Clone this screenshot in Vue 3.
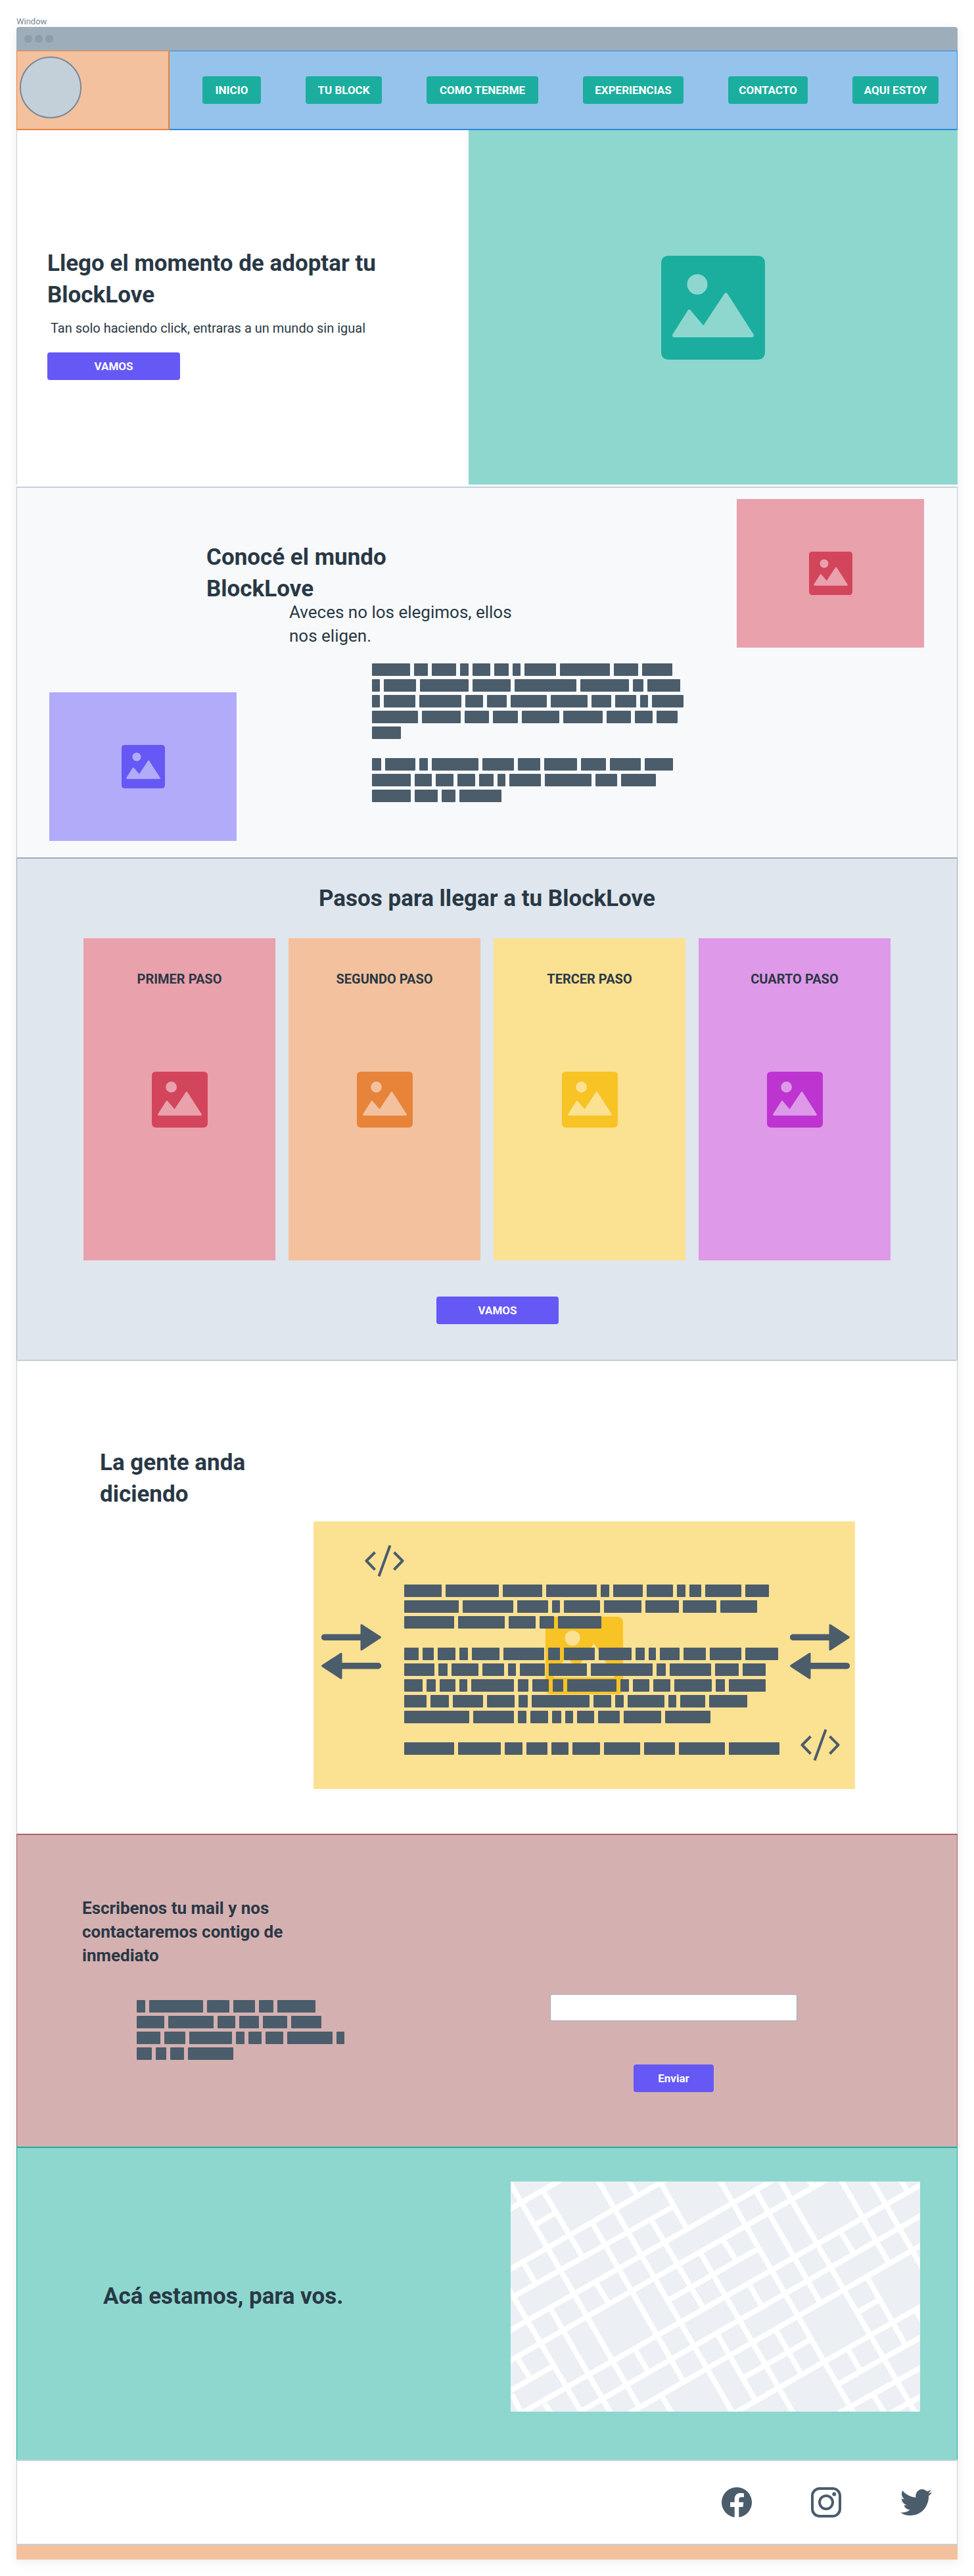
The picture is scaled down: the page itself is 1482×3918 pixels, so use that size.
<script setup>
const navItems = ['INICIO', 'TU BLOCK', 'COMO TENERME', 'EXPERIENCIAS', 'CONTACTO', 'AQUI ESTOY']

const steps = [
  { title: 'PRIMER PASO', tone: 'pink' },
  { title: 'SEGUNDO PASO', tone: 'orange' },
  { title: 'TERCER PASO', tone: 'yellow' },
  { title: 'CUARTO PASO', tone: 'violet' },
]

// Placeholder copy: paragraphs > lines > word widths.
const aboutCopy = [
  [
    [58, 21, 37, 13, 27, 22, 12, 48, 76, 37, 46],
    [12, 49, 74, 58, 94, 74, 16, 50],
    [12, 48, 64, 27, 30, 55, 56, 30, 32, 12, 48],
    [70, 59, 37, 38, 57, 60, 37, 27, 32],
    [44],
  ],
  [
    [14, 46, 13, 71, 48, 34, 50, 38, 47, 43],
    [59, 26, 27, 27, 22, 12, 48, 71, 33, 53],
    [59, 35, 21, 64],
  ],
]

const reviewCopy = [
  [
    [57, 81, 60, 77, 13, 45, 40, 13, 18, 55, 36],
    [83, 77, 47, 12, 55, 57, 51, 51, 56],
    [76, 71, 41, 22, 66],
  ],
  [
    [22, 17, 27, 13, 42, 62, 18, 47, 50, 14, 11, 30, 34, 48, 50],
    [46, 14, 41, 33, 12, 38, 58, 94, 14, 63, 36, 35],
    [28, 14, 24, 12, 65, 16, 25, 16, 75, 13, 25, 26, 57, 14, 56],
    [34, 28, 46, 42, 14, 88, 27, 13, 56, 12, 38, 58],
    [99, 62, 13, 27, 14, 12, 26, 33, 57, 69],
  ],
  [[76, 65, 27, 32, 26, 42, 55, 47, 70, 77]],
]

const contactCopy = [
  [
    [13, 82, 34, 33, 22, 58],
    [42, 69, 27, 30, 37, 46],
    [36, 32, 65, 13, 20, 27, 69, 12],
    [23, 16, 21, 69],
  ],
]

// Map streets as [x1, y1, x2, y2] in the map's own units.
const streets = [
  [70, 303, 236, 168], [70, 578, 572, 168], [86, 698, 600, 288], [70, 857, 920, 168],
  [70, 995, 1090, 168], [70, 1133, 208, 1020], [586, 714, 873, 481], [112, 1230, 1400, 186],
  [293, 1230, 1400, 326], [460, 1230, 1400, 463], [828, 1067, 1045, 892], [1193, 770, 1262, 714],
  [152, 373, 218, 318], [798, 1230, 1400, 741], [1130, 1099, 1400, 881], [1133, 1230, 1400, 1021],
  [1300, 1230, 1400, 1152],
  [72, 175, 494, 1214], [70, 665, 305, 1230], [80, 1145, 110, 1230], [183, 222, 308, 520],
  [120, 552, 157, 640], [205, 755, 398, 1230], [100, 985, 138, 1070], [185, 1188, 205, 1230],
  [357, 168, 791, 1230], [455, 168, 484, 238], [340, 365, 632, 1085], [351, 637, 390, 727],
  [561, 185, 640, 382], [530, 352, 697, 755], [478, 945, 517, 1038], [563, 1155, 595, 1230],
  [687, 500, 986, 1230], [760, 440, 800, 530], [749, 168, 1180, 1230], [865, 215, 1072, 725],
  [943, 168, 1379, 1230], [1037, 168, 1047, 192], [1140, 168, 1295, 550], [1238, 168, 1400, 566],
  [1333, 168, 1355, 222], [1139, 405, 1180, 502], [846, 650, 884, 742], [743, 875, 865, 1175],
  [931, 855, 1011, 1053], [1225, 615, 1347, 920], [1162, 940, 1200, 1033], [1245, 1150, 1280, 1230],
  [1381, 762, 1400, 812],
]
</script>

<template>
  <svg class="sprite" aria-hidden="true">
    <symbol id="picture" viewBox="0 0 158 158">
      <path
        fill="currentColor"
        fill-rule="evenodd"
        d="M12 0H146Q158 0 158 12V146Q158 158 146 158H12Q0 158 0 146V12Q0 0 12 0Z
           M55 28A15.5 15.5 0 1 0 55 59A15.5 15.5 0 1 0 55 28Z
           M20 124Q16 124 17.5 119.500L40 84Q42.500 79.500 45.500 84L64.300 106L96 58Q98.300 54.500 101 58L140.500 119.500Q142 124 138 124Z"
      />
    </symbol>
    <symbol id="code" viewBox="0 0 60 48">
      <path
        fill="none"
        stroke="currentColor"
        stroke-width="4"
        stroke-linejoin="round"
        d="M15.500 11L2.500 24L15.500 37.500M44.500 11L57.500 24L44.500 37.500M38.500 0.500L21.500 47.500"
      />
    </symbol>
    <symbol id="arrows" viewBox="0 0 91 84">
      <path
        fill="currentColor"
        d="M4.500 15.500H59.500V2Q59.500 -1 62.500 1L90 18.800Q92 20.300 90 21.800L62.500 39.700Q59.500 41.500 59.500 38.500V25H4.500A4.700 4.700 0 0 1 4.500 15.500Z
           M86.500 59H31.500V45.500Q31.500 42.500 28.500 44.500L1 62.300Q-1 63.800 1 65.300L28.500 83.200Q31.500 85 31.500 82V68.500H86.500A4.700 4.700 0 0 0 86.500 59Z"
      />
    </symbol>
  </svg>

  <div class="page">
    <p class="frame-name">Window</p>
    <div class="window">
      <div class="title-bar">
        <span class="dot"></span><span class="dot"></span><span class="dot"></span>
      </div>

      <header class="header">
        <div class="brand"><span class="logo"></span></div>
        <nav class="nav">
          <button v-for="item in navItems" :key="item" type="button" class="btn btn-teal">{{ item }}</button>
        </nav>
      </header>

      <section class="hero">
        <div class="hero-text">
          <h1 class="title">Llego el momento de adoptar tu<br />BlockLove</h1>
          <p class="hero-sub">Tan solo haciendo click, entraras a un mundo sin igual</p>
          <button type="button" class="btn btn-purple hero-btn">VAMOS</button>
        </div>
        <div class="hero-image teal"><svg class="icon-xl"><use href="#picture" /></svg></div>
      </section>

      <section class="about">
        <div class="thumb purple about-left"><svg class="icon-sm"><use href="#picture" /></svg></div>
        <div class="about-text">
          <h2 class="title">Conocé el mundo<br />BlockLove</h2>
          <p class="about-sub">Aveces no los elegimos, ellos<br />nos eligen.</p>
          <div class="copy about-copy">
            <div v-for="(para, p) in aboutCopy" :key="p" class="para">
              <div v-for="(line, l) in para" :key="l" class="line">
                <span v-for="(w, i) in line" :key="i" class="word" :style="{ width: w + 'px' }"></span>
              </div>
            </div>
          </div>
        </div>
        <div class="thumb pink about-right"><svg class="icon-sm"><use href="#picture" /></svg></div>
      </section>

      <section class="steps">
        <h2 class="title">Pasos para llegar a tu BlockLove</h2>
        <div class="cards">
          <article v-for="step in steps" :key="step.title" class="card" :class="step.tone">
            <h3 class="card-title">{{ step.title }}</h3>
            <svg class="icon-md"><use href="#picture" /></svg>
          </article>
        </div>
        <button type="button" class="btn btn-purple steps-btn">VAMOS</button>
      </section>

      <section class="reviews">
        <h2 class="title">La gente anda<br />diciendo</h2>
        <div class="review-box yellow">
          <svg class="icon-lg review-picture"><use href="#picture" /></svg>
          <div class="review-left">
            <svg class="code"><use href="#code" /></svg>
            <svg class="arrows"><use href="#arrows" /></svg>
          </div>
          <div class="copy review-copy">
            <div v-for="(para, p) in reviewCopy" :key="p" class="para">
              <div v-for="(line, l) in para" :key="l" class="line">
                <span v-for="(w, i) in line" :key="i" class="word" :style="{ width: w + 'px' }"></span>
              </div>
            </div>
          </div>
          <div class="review-right">
            <svg class="arrows"><use href="#arrows" /></svg>
            <svg class="code"><use href="#code" /></svg>
          </div>
        </div>
      </section>

      <section class="contact">
        <div class="contact-text">
          <h2 class="subtitle">Escribenos tu mail y nos<br />contactaremos contigo de<br />inmediato</h2>
          <div class="copy contact-copy">
            <div v-for="(para, p) in contactCopy" :key="p" class="para">
              <div v-for="(line, l) in para" :key="l" class="line">
                <span v-for="(w, i) in line" :key="i" class="word" :style="{ width: w + 'px' }"></span>
              </div>
            </div>
          </div>
        </div>
        <form class="contact-form" @submit.prevent>
          <input id="mail" class="mail" type="email" aria-label="Mail" />
          <button type="submit" class="btn btn-purple send">Enviar</button>
        </form>
      </section>

      <section class="place">
        <h2 class="title">Acá estamos, para vos.</h2>
        <svg class="map" viewBox="76 174 1318 1050" preserveAspectRatio="none" role="img" aria-label="Mapa">
          <line v-for="(s, i) in streets" :key="i" class="street" :x1="s[0]" :y1="s[1]" :x2="s[2]" :y2="s[3]" />
        </svg>
      </section>

      <footer class="footer">
        <a href="#" class="social" aria-label="Facebook">
          <svg width="46" height="46" viewBox="0 0 46 46">
            <circle cx="23" cy="23" r="23" fill="currentColor" />
            <path fill="#fff" d="M19.700 46V30H13V22.700H19.700V18C19.700 12 23.500 8.700 29 8.700Q31.500 8.700 34 9.200V15H30.500C27.500 15 26.300 16.500 26.300 19V22.700H33.300L32.500 30H26.300V46Z" />
          </svg>
        </a>
        <a href="#" class="social" aria-label="Instagram">
          <svg width="46" height="46" viewBox="0 0 46 46">
            <rect x="2" y="2" width="42" height="42" rx="11" fill="none" stroke="currentColor" stroke-width="4" />
            <circle cx="23" cy="23" r="10" fill="none" stroke="currentColor" stroke-width="4" />
            <circle cx="35.300" cy="10.500" r="3" fill="currentColor" />
          </svg>
        </a>
        <a href="#" class="social" aria-label="Twitter">
          <svg width="48" height="40" viewBox="0 2.200 24 19.600" preserveAspectRatio="none">
            <path
              fill="currentColor"
              d="M23.953 4.570a10 10 0 01-2.825.775 4.958 4.958 0 002.163-2.723c-.951.555-2.005.959-3.127 1.184a4.920 4.920 0 00-8.384 4.482C7.690 8.095 4.067 6.130 1.640 3.162a4.822 4.822 0 00-.666 2.475c0 1.710.870 3.213 2.188 4.096a4.904 4.904 0 01-2.228-.616v.060a4.923 4.923 0 003.946 4.827 4.996 4.996 0 01-2.212.085 4.936 4.936 0 004.604 3.417 9.867 9.867 0 01-6.102 2.105c-.390 0-.779-.023-1.170-.067a13.995 13.995 0 007.557 2.209c9.053 0 13.998-7.496 13.998-13.985 0-.210 0-.420-.015-.630A9.935 9.935 0 0024 4.590z"
            />
          </svg>
        </a>
      </footer>
      <div class="footer-bar"></div>
    </div>
  </div>
</template>

<style>
body {
  margin: 0;
  background: #fff;
}
</style>

<style scoped>
* {
  box-sizing: border-box;
}
.sprite {
  position: absolute;
  width: 0;
  height: 0;
}
.page {
  padding: 25px;
  font-family: Roboto, "Liberation Sans", sans-serif;
  color: #293845;
}
h1,
h2,
h3,
p {
  margin: 0;
}
.frame-name {
  font-size: 13px;
  line-height: 16px;
  color: #788896;
}
.window {
  border-radius: 4px 4px 0 0;
  background: #fff;
  box-shadow: 0 4px 16px rgba(0, 0, 0, 0.08);
}
.title-bar {
  display: flex;
  align-items: center;
  gap: 4px;
  height: 36px;
  padding-left: 12px;
  border-radius: 4px 4px 0 0;
  background: #9eadba;
}
.dot {
  width: 12px;
  height: 12px;
  border-radius: 50%;
  background: #8c9cab;
}

.title {
  font-size: 35px;
  line-height: 48px;
  font-weight: 700;
}
.subtitle {
  font-size: 26px;
  line-height: 36px;
  font-weight: 700;
}
.btn {
  height: 42px;
  padding: 0;
  border: 0;
  border-radius: 4px;
  font-family: inherit;
  font-size: 17px;
  font-weight: 700;
  color: #fff;
  white-space: nowrap;
}
.btn-teal {
  background: #1bae9f;
}
.btn-purple {
  background: #6558f5;
}

.teal {
  background: #8dd7cf;
  color: #1bae9f;
}
.purple {
  background: #b2abfa;
  color: #6558f5;
}
.pink {
  background: #e9a1ac;
  color: #d3455b;
}
.orange {
  background: #f3c19d;
  color: #e8833a;
}
.yellow {
  background: #fbe192;
  color: #f7c325;
}
.violet {
  background: #de99e8;
  color: #bd34d1;
}
.icon-xl {
  width: 158px;
  height: 158px;
}
.icon-lg {
  width: 118px;
  height: 118px;
}
.icon-md {
  width: 85px;
  height: 85px;
}
.icon-sm {
  width: 66px;
  height: 66px;
}

.copy {
  display: flex;
  flex-direction: column;
  gap: 24px;
}
.line {
  display: flex;
  gap: 6px;
  height: 24px;
}
.word {
  flex: none;
  height: 19px;
  border-radius: 1px;
  background: #4b5c6b;
}

.header {
  display: flex;
}
.brand {
  flex: none;
  width: 233px;
  padding: 8px 0 16px 4px;
  border: solid #e8833a;
  border-width: 1px 2px 2px 1px;
  background: #f3c19d;
}
.logo {
  display: block;
  width: 94px;
  height: 94px;
  border: 2px solid #788896;
  border-radius: 50%;
  background: #c3cfd9;
}
.nav {
  flex: 1;
  display: grid;
  grid-template-columns: 89fr 116fr 170fr 153fr 121fr 131fr;
  align-items: center;
  gap: 68px;
  padding: 0 28px 0 50px;
  border: solid #2d88d9;
  border-width: 1px 1px 2px 0;
  background: #96c3ec;
}

.hero {
  display: grid;
  grid-template-columns: 688fr 744fr;
  padding-bottom: 3px;
}
.hero-text {
  padding: 179px 20px 0 46px;
  border-left: 1px solid #c3cfd9;
}
.hero-sub {
  margin-top: 11px;
  padding-left: 5px;
  font-size: 20px;
  line-height: 30px;
}
.hero-btn {
  width: 202px;
  margin-top: 22px;
}
.hero-image {
  display: grid;
  place-items: center;
  min-height: 539px;
}

.about {
  display: grid;
  grid-template-columns: 241px 44px 1fr 285px;
  min-height: 564px;
  padding: 17px 50px 25px 49px;
  border: 1px solid #c3cfd9;
  border-top-width: 2px;
  border-bottom: 0;
  background: #f7f9fb;
}
.thumb {
  display: grid;
  place-items: center;
  height: 226px;
}
.about-left {
  grid-area: 1 / 1 / 2 / 3;
  align-self: end;
}
.about-text {
  grid-area: 1 / 2 / 2 / 4;
  padding-top: 65px;
}
.about-right {
  grid-area: 1 / 4;
}
.about-text .title {
  margin-left: -2px;
}
.about-sub {
  margin: -7px 0 0 124px;
  font-size: 26px;
  line-height: 36px;
}
.about-copy {
  margin: 24px 0 0 250px;
}

.steps {
  display: flex;
  flex-direction: column;
  align-items: center;
  padding: 37px 101px 54px;
  border: 1px solid #9eadba;
  border-top-width: 2px;
  border-bottom: 0;
  background: #dfe6ed;
}
.cards {
  display: grid;
  grid-template-columns: repeat(4, 1fr);
  gap: 20px;
  align-self: stretch;
  margin-top: 36px;
}
.card {
  display: grid;
  justify-items: center;
  min-height: 490px;
}
.card-title {
  grid-area: 1 / 1;
  padding-top: 47px;
  font-size: 20px;
  line-height: 30px;
  font-weight: 700;
  color: #293845;
}
.card .icon-md {
  grid-area: 1 / 1;
  align-self: center;
}
.steps-btn {
  width: 186px;
  margin: 55px 0 0 32px;
}

.reviews {
  padding: 131px 155px 68px 126px;
  border: 1px solid #c3cfd9;
  border-top-width: 2px;
  border-bottom: 0;
}
.review-box {
  display: grid;
  grid-template-columns: 130px 1fr 91px;
  min-height: 407px;
  margin: 17px 0 0 325px;
  padding: 0 8px;
}
.review-picture {
  grid-area: 1 / 1 / 2 / 4;
  place-self: center;
}
.review-left {
  grid-area: 1 / 1;
  display: flex;
  flex-direction: column;
  gap: 72px;
  padding: 36px 0 0 4px;
}
.review-left .code {
  align-self: flex-end;
}
.review-copy {
  grid-area: 1 / 2;
  padding-top: 96px;
}
.review-right {
  grid-area: 1 / 3;
  display: flex;
  flex-direction: column;
  align-items: center;
  gap: 76px;
  padding-top: 156px;
}
.code {
  width: 60px;
  height: 48px;
  color: #4b5c6b;
}
.arrows {
  width: 91px;
  height: 84px;
  color: #4b5c6b;
}

.contact {
  display: grid;
  grid-template-columns: 712fr 619fr;
  min-height: 476px;
  padding: 93px 0 0 99px;
  border: 1px solid #af6164;
  border-top-width: 2px;
  border-bottom: 0;
  background: #d5b0b1;
}
.contact-copy {
  margin: 50px 0 0 83px;
}
.contact-form {
  display: flex;
  flex-direction: column;
  align-items: center;
  gap: 66px;
  width: 376px;
  padding-top: 149px;
}
.mail {
  width: 100%;
  height: 41px;
  padding: 0 12px;
  border: 1px solid #9eadba;
  border-radius: 3px;
  background: #fff;
  font-family: inherit;
  font-size: 17px;
}
.send {
  width: 122px;
}

.place {
  display: flex;
  align-items: center;
  justify-content: space-between;
  padding: 51px 56px 73px 131px;
  border: 1px solid #1bae9f;
  border-top-width: 2px;
  border-bottom: 0;
  background: #8dd7cf;
}
.map {
  width: 623px;
  height: 350px;
  background: #ecf0f5;
}
.street {
  stroke: #fff;
  stroke-width: 8px;
  vector-effect: non-scaling-stroke;
}

.footer {
  display: flex;
  align-items: center;
  justify-content: flex-end;
  gap: 90px;
  height: 128px;
  padding-right: 38px;
  border: 1px solid #c3cfd9;
  border-top-width: 2px;
  border-bottom: 0;
}
.social {
  display: flex;
  color: #4b5c6b;
}
.footer-bar {
  height: 24px;
  border-top: 2px solid #c3cfd9;
  background: #f3c19d;
}
</style>
